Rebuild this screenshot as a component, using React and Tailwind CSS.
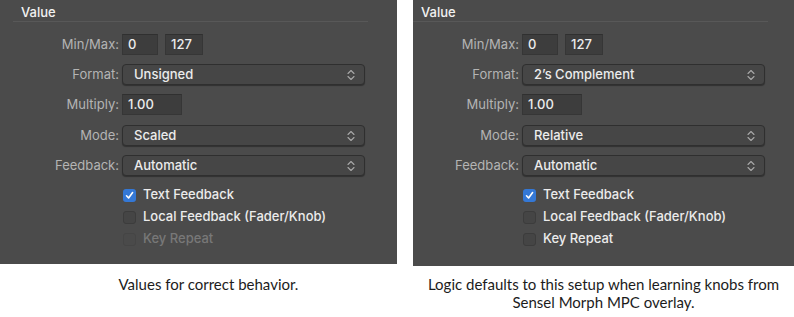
import React from "react";

const rows = [
  { label: "Min/Max:", kind: "minmax", mt: "mt-[12px]" },
  { label: "Format:", kind: "select", key: "format", mt: "mt-[9px]" },
  { label: "Multiply:", kind: "input", value: "1.00", mt: "mt-[9px]" },
  { label: "Mode:", kind: "select", key: "mode", mt: "mt-[10px]" },
  { label: "Feedback:", kind: "select", key: "feedback", mt: "mt-[9px]" },
];

function Chevrons() {
  return (
    <svg width="8" height="12" viewBox="0 0 8 12" fill="none" stroke="#a8a8a8" strokeWidth="1.1" strokeLinecap="round" strokeLinejoin="round">
      <path d="M1 4.5 L4 1.5 L7 4.5" />
      <path d="M1 7.5 L4 10.5 L7 7.5" />
    </svg>
  );
}

function Select({ value }) {
  return (
    <div className="w-[243px] h-[21px] flex items-center justify-between pl-[11px] pr-[9px] bg-[#464646] border border-[#2f2f2f] rounded-[4px] shadow-[0_1px_1px_rgba(0,0,0,0.35)] text-[13px] font-medium text-[#ececec]">
      <span>{value}</span>
      <Chevrons />
    </div>
  );
}

function Field({ value, w }) {
  return (
    <div className={`${w} h-[21px] flex items-center pl-[5px] bg-[#3d3d3d] border border-[#363636] border-t-[#303030] text-[13px] font-medium text-[#ececec]`}>
      {value}
    </div>
  );
}

function Check({ label, checked, disabled }) {
  return (
    <div className="h-[22px] flex items-center gap-[7px] pl-[1px]">
      {checked ? (
        <div className="w-[13px] h-[13px] rounded-[3px] bg-[#3478d6] flex items-center justify-center">
          <svg width="9" height="9" viewBox="0 0 9 9" fill="none" stroke="#ffffff" strokeWidth="1.6" strokeLinecap="round" strokeLinejoin="round">
            <path d="M1.5 4.8 L3.6 7 L7.6 1.6" />
          </svg>
        </div>
      ) : (
        <div className={`w-[13px] h-[13px] rounded-[3px] border ${disabled ? "bg-[#4a4a4a] border-[#454545]" : "bg-[#454545] border-[#3c3c3c]"}`} />
      )}
      <span className={`text-[13px] font-medium ${disabled ? "text-[#787878]" : "text-[#ececec]"}`}>{label}</span>
    </div>
  );
}

function Panel({ width, height, headerPl, lineMl, labelW, checksPl, values, keyRepeatDisabled }) {
  return (
    <div className={`${width} ${height} bg-[#4b4b4b] pt-[4px]`} style={{ fontFamily: "Inter, 'Liberation Sans', sans-serif" }}>
      <div className={`${headerPl} h-[16px] leading-[16px] text-[13px] font-medium text-[#f2f2f2]`}>Value</div>
      <div className={`${lineMl} mt-[1px] w-[355px] h-px bg-[#585858]`} />
      {rows.map(r => (
        <div key={r.label} className={`${r.mt} flex items-center gap-[3px]`}>
          <div className={`${labelW} text-right text-[13px] text-[#b4b4b4]`}>{r.label}</div>
          {r.kind === "minmax" && (
            <div className="flex gap-[7px]">
              <Field value="0" w="w-[36px]" />
              <Field value="127" w="w-[38px]" />
            </div>
          )}
          {r.kind === "input" && <Field value={r.value} w="w-[60px]" />}
          {r.kind === "select" && <Select value={values[r.key]} />}
        </div>
      ))}
      <div className={`mt-[8px] flex flex-col ${checksPl}`}>
        <Check label="Text Feedback" checked />
        <Check label="Local Feedback (Fader/Knob)" />
        <Check label="Key Repeat" disabled={keyRepeatDisabled} />
      </div>
    </div>
  );
}

export default function App() {
  return (
    <div className="w-[794px] h-[317px] bg-white flex gap-[16px]">
      <div className="flex flex-col">
        <Panel
          width="w-[397px]" height="h-[264px]" headerPl="pl-[21px]" lineMl="ml-[13px]" labelW="w-[119px]" checksPl="pl-[122px]"
          values={{ format: "Unsigned", mode: "Scaled", feedback: "Automatic" }}
          keyRepeatDisabled
        />
        <p className="mt-[11px] pl-[20px] text-center text-[15px] leading-[18px] text-[#1c1c1c]" style={{ fontFamily: "Lato, 'Liberation Sans', sans-serif" }}>
          Values for correct behavior.
        </p>
      </div>
      <div className="flex flex-col">
        <Panel
          width="w-[381px]" height="h-[266px]" headerPl="pl-[8px]" lineMl="ml-0" labelW="w-[106px]" checksPl="pl-[109px]"
          values={{ format: "2’s Complement", mode: "Relative", feedback: "Automatic" }}
        />
        <p className="mt-[9px] text-center text-[15px] leading-[18px] text-[#1c1c1c]" style={{ fontFamily: "Lato, 'Liberation Sans', sans-serif" }}>
          Logic defaults to this setup when learning knobs from<br />Sensel Morph MPC overlay.
        </p>
      </div>
    </div>
  );
}
